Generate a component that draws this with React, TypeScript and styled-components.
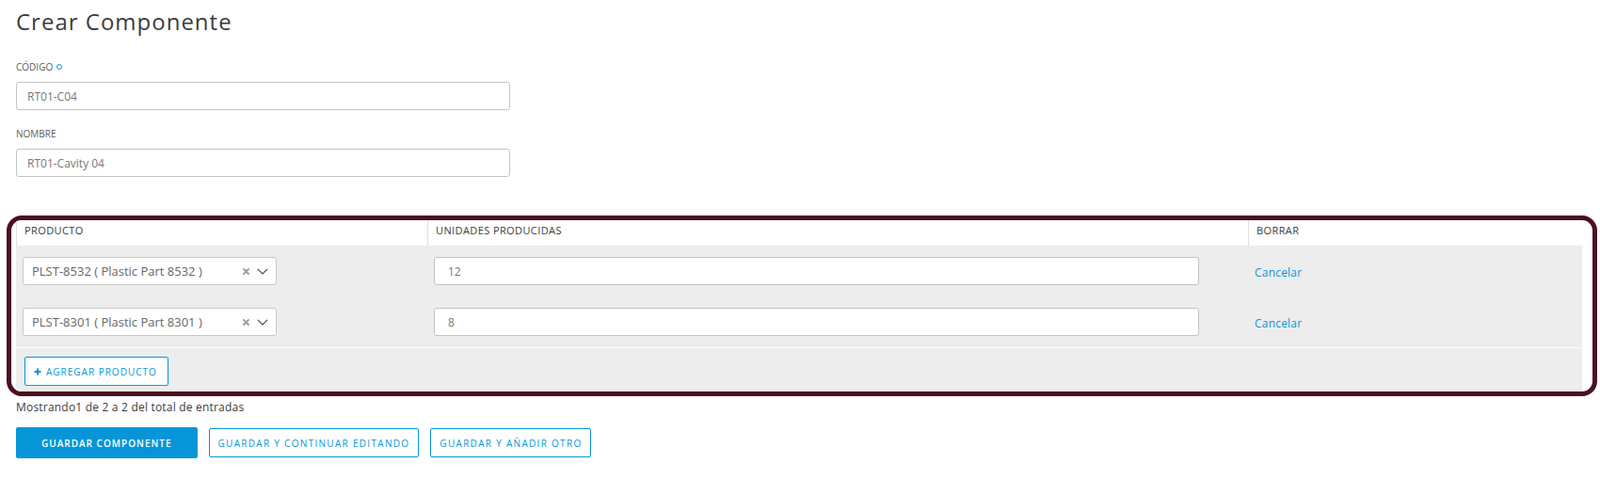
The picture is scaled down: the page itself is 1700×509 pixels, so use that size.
import React from 'react'
import styled, { createGlobalStyle } from 'styled-components'

type ProductRow = { id: number; product: string; units: string }

const rows: ProductRow[] = [
  { id: 1, product: 'PLST-8532 ( Plastic Part 8532 )', units: '12' },
  { id: 2, product: 'PLST-8301 ( Plastic Part 8301 )', units: '8' },
]

const GlobalStyle = createGlobalStyle`
  * { box-sizing: border-box; }
  body {
    margin: 0;
    background: #fff;
    color: #3c3c3c;
    font-family: "Open Sans", "Liberation Sans", sans-serif;
  }
`

const ClearIcon = () => (
  <svg width="7" height="7" viewBox="0 0 7 7">
    <path d="M1 1 L6 6 M6 1 L1 6" stroke="#9a9a9a" strokeWidth="1.8" strokeLinecap="round" />
  </svg>
)

const ChevronIcon = () => (
  <svg width="12" height="7" viewBox="0 0 12 7">
    <path d="M0.8 0.8 L6 6 L11.2 0.8" fill="none" stroke="#4a4a4a" strokeWidth="1.2" />
  </svg>
)

const PlusIcon = () => (
  <svg width="8" height="8" viewBox="0 0 8 8">
    <path d="M4 0.5 V7.5 M0.5 4 H7.5" stroke="#0696d7" strokeWidth="2" />
  </svg>
)

export default function App() {
  return (
    <>
      <GlobalStyle />
      <Page>
        <Title>Crear Componente</Title>

        <FormStack>
          <Field>
            <Label>
              CÓDIGO <RequiredDot />
            </Label>
            <TextInput defaultValue="RT01-C04" />
          </Field>
          <Field>
            <Label>NOMBRE</Label>
            <TextInput defaultValue="RT01-Cavity 04" />
          </Field>
        </FormStack>

        <Highlight>
          <HeaderRow>
            <HeaderCell>PRODUCTO</HeaderCell>
            <HeaderCell>UNIDADES PRODUCIDAS</HeaderCell>
            <HeaderCell>BORRAR</HeaderCell>
          </HeaderRow>

          {rows.map((row) => (
            <BodyRow key={row.id}>
              <Cell>
                <Select>
                  <SelectValue>{row.product}</SelectValue>
                  <ClearIcon />
                  <ChevronIcon />
                </Select>
              </Cell>
              <Cell>
                <NumberInput defaultValue={row.units} />
              </Cell>
              <Cell>
                <CancelLink href="#">Cancelar</CancelLink>
              </Cell>
            </BodyRow>
          ))}

          <AddRow>
            <AddButton>
              <PlusIcon />
              AGREGAR PRODUCTO
            </AddButton>
          </AddRow>
        </Highlight>

        <Summary>Mostrando1 de 2 a 2 del total de entradas</Summary>

        <Actions>
          <PrimaryButton>GUARDAR COMPONENTE</PrimaryButton>
          <SecondaryButton>GUARDAR Y CONTINUAR EDITANDO</SecondaryButton>
          <SecondaryButton>GUARDAR Y AÑADIR OTRO</SecondaryButton>
        </Actions>
      </Page>
    </>
  )
}

const Page = styled.div`
  padding: 7px 3px 0 17px;
`

const Title = styled.h1`
  margin: 0;
  font-size: 24px;
  line-height: 32px;
  font-weight: 400;
  letter-spacing: 1px;
  color: #3c3c3c;
`

const FormStack = styled.div`
  display: flex;
  flex-direction: column;
  gap: 18px;
  margin-top: 25px;
`

const Field = styled.div`
  display: flex;
  flex-direction: column;
  gap: 9px;
`

const Label = styled.label`
  display: flex;
  align-items: center;
  gap: 4px;
  font-size: 10px;
  line-height: 14px;
  color: #5c5c5c;
`

const RequiredDot = styled.span`
  width: 6px;
  height: 6px;
  border-radius: 50%;
  border: 1.5px solid #0696d7;
`

const TextInput = styled.input`
  width: 525px;
  height: 30px;
  padding: 0 11px;
  border: 1px solid #c4c4c4;
  border-radius: 3px;
  font-family: inherit;
  font-size: 12px;
  color: #777;
  outline: none;
`

const Highlight = styled.div`
  margin: 41px 0 0 -10px;
  padding: 0 11px 0 5px;
  border: 5px solid #4b0f21;
  border-radius: 16px;
  overflow: hidden;
  background: #fff;
`

const columns = `
  display: grid;
  grid-template-columns: 437px 872px 1fr;
`

const HeaderRow = styled.div`
  ${columns}
  height: 27px;
  background: #fff;
`

const HeaderCell = styled.div`
  padding: 3px 8px 0;
  border-left: 1px solid #dedede;
  font-size: 11px;
  line-height: 16px;
  letter-spacing: 0.4px;
  color: #3c3c3c;
`

const BodyRow = styled.div`
  ${columns}
  height: 54px;
  align-items: center;
  background: #ededed;
`

const Cell = styled.div`
  padding-left: 7px;
`

const Select = styled.div`
  display: flex;
  align-items: center;
  gap: 8px;
  width: 270px;
  height: 30px;
  padding: 0 8px 0 9px;
  background: #fff;
  border: 1px solid #c8c8c8;
  border-radius: 3px;
  font-size: 13px;
  color: #666;
`

const SelectValue = styled.span`
  flex: 1;
  white-space: nowrap;
`

const NumberInput = styled.input`
  width: 813px;
  height: 30px;
  padding: 0 14px;
  border: 1px solid #c4c4c4;
  border-radius: 3px;
  font-family: inherit;
  font-size: 12px;
  color: #777;
  outline: none;
`

const CancelLink = styled.a`
  font-size: 12px;
  letter-spacing: 0.2px;
  color: #0696d7;
  text-decoration: none;
`

const AddRow = styled.div`
  height: 47px;
  padding: 9px 0 0 9px;
  border-top: 1px solid #fff;
  background: #ededed;
`

const AddButton = styled.button`
  display: inline-flex;
  align-items: center;
  gap: 5px;
  height: 31px;
  padding: 0 11px 0 9px;
  background: #fff;
  border: 1px solid #0696d7;
  border-radius: 2px;
  font-family: inherit;
  font-size: 10px;
  letter-spacing: 1px;
  color: #0696d7;
`

const Summary = styled.p`
  margin: 4px 0 0;
  font-size: 12px;
  line-height: 16px;
  letter-spacing: 0.2px;
  color: #3c3c3c;
`

const Actions = styled.div`
  display: flex;
  align-items: center;
  gap: 12px;
  margin-top: 13px;
`

const PrimaryButton = styled.button`
  height: 33px;
  padding: 0 27px;
  background: #0696d7;
  border: none;
  border-radius: 2px;
  font-family: inherit;
  font-size: 10px;
  font-weight: 600;
  letter-spacing: 1px;
  color: #fff;
`

const SecondaryButton = styled.button`
  height: 31px;
  padding: 0 9px;
  background: #fff;
  border: 1px solid #0696d7;
  border-radius: 2px;
  font-family: inherit;
  font-size: 10px;
  letter-spacing: 1.3px;
  color: #0696d7;
`
